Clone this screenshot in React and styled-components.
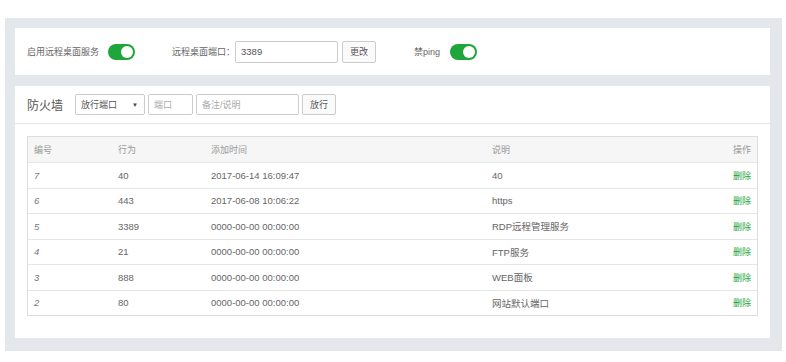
import styled, { createGlobalStyle } from "styled-components";

const GlobalStyle = createGlobalStyle`
  body {
    margin: 0;
    background: #fff;
    font-family: "Liberation Sans", "Noto Sans CJK SC", sans-serif;
    font-size: 9.5px;
    color: #666;
  }
`;

const Frame = styled.div`
  margin: 18px 4px 0 5px;
  padding: 10px 12px 13px 10px;
  background-color: #e4e7eb;
  display: flex;
  flex-direction: column;
  gap: 11px;
`;

const Panel = styled.div`
  background-color: #fff;
`;

const SettingBar = styled.div`
  height: 47px;
  display: flex;
  align-items: center;
  padding-left: 12px;
`;

const Label = styled.span`
  color: #666;
  font-size: 9px;
  margin-right: ${(p) => p.$gap || 0}px;
`;

const Toggle = styled.div`
  width: 27px;
  height: 16px;
  border-radius: 8px;
  background-color: #20a53a;
  position: relative;
  margin-right: ${(p) => p.$gap || 0}px;

  &::after {
    content: "";
    position: absolute;
    right: 2px;
    top: 2px;
    width: 12px;
    height: 12px;
    border-radius: 50%;
    background-color: #fff;
  }
`;

const TextInput = styled.div`
  width: ${(p) => p.$w}px;
  height: ${(p) => p.$h || 21}px;
  box-sizing: border-box;
  border: 1px solid #ccc;
  border-radius: 2px;
  padding-left: 5px;
  display: flex;
  align-items: center;
  font-size: ${(p) => (p.$placeholder ? 9 : 9.5)}px;
  color: ${(p) => (p.$placeholder ? "#aaa" : "#555")};
  background: #fff;
  margin-right: ${(p) => p.$gap || 0}px;
`;

const Button = styled.div`
  width: 34px;
  height: ${(p) => p.$h || 21}px;
  box-sizing: border-box;
  border: 1px solid #ccc;
  border-radius: 2px;
  background: #fafafa;
  display: flex;
  align-items: center;
  justify-content: center;
  font-size: 9px;
  color: #555;
  margin-right: ${(p) => p.$gap || 0}px;
`;

const SelectBox = styled(TextInput)`
  justify-content: space-between;
  padding-right: 6px;
  font-size: 9px;
  color: #555;

  &::after {
    content: "▼";
    font-size: 6px;
    color: #444;
  }
`;

const FirewallHead = styled.div`
  height: 37px;
  border-bottom: 1px solid #e6e6e6;
  display: flex;
  align-items: center;
  gap: 3px;
  padding-left: 12px;
`;

const Title = styled.span`
  font-size: 12px;
  color: #555;
  margin-right: 9px;
`;

const TableWrap = styled.div`
  padding: 12px 12px 22px 12px;
`;

const Table = styled.div`
  border: 1px solid #ddd;
`;

const Row = styled.div`
  display: grid;
  grid-template-columns: 84px 93px 281px 1fr auto;
  align-items: center;
  box-sizing: border-box;
  height: ${(p) => (p.$head ? 25 : 25.5)}px;
  padding: 0 6px;
  background-color: ${(p) => (p.$head ? "#f6f6f6" : "#fff")};
  color: ${(p) => (p.$head ? "#999" : "#666")};
  border-top: ${(p) => (p.$first ? "none" : "1px solid #e6e6e6")};
`;

const Cjk = styled.span`
  font-size: 9px;
`;

const Id = styled.span`
  font-style: italic;
  color: #777;
`;

const DelLink = styled.span`
  font-size: 9px;
  color: #20a53a;
`;

const rows = [
  { id: 7, port: "40", time: "2017-06-14 16:09:47", note: "40" },
  { id: 6, port: "443", time: "2017-06-08 10:06:22", note: "https" },
  { id: 5, port: "3389", time: "0000-00-00 00:00:00", note: "RDP远程管理服务" },
  { id: 4, port: "21", time: "0000-00-00 00:00:00", note: "FTP服务" },
  { id: 3, port: "888", time: "0000-00-00 00:00:00", note: "WEB面板" },
  { id: 2, port: "80", time: "0000-00-00 00:00:00", note: "网站默认端口" },
];

const App = () => {
  return (
    <>
      <GlobalStyle />
      <Frame>
        <Panel>
          <SettingBar>
            <Label $gap={9}>启用远程桌面服务</Label>
            <Toggle $gap={37} />
            <Label $gap={0}>远程桌面端口：</Label>
            <TextInput $w={103} $h={22} $gap={4}>3389</TextInput>
            <Button $h={22} $gap={38}>更改</Button>
            <Label $gap={10}>禁ping</Label>
            <Toggle />
          </SettingBar>
        </Panel>
        <Panel>
          <FirewallHead>
            <Title>防火墙</Title>
            <SelectBox $w={70}>放行端口</SelectBox>
            <TextInput $w={45} $placeholder>端口</TextInput>
            <TextInput $w={103} $placeholder>备注/说明</TextInput>
            <Button>放行</Button>
          </FirewallHead>
          <TableWrap>
            <Table>
              <Row $head $first>
                <Cjk>编号</Cjk>
                <Cjk>行为</Cjk>
                <Cjk>添加时间</Cjk>
                <Cjk>说明</Cjk>
                <Cjk>操作</Cjk>
              </Row>
              {rows.map((r) => (
                <Row key={r.id}>
                  <Id>{r.id}</Id>
                  <span>{r.port}</span>
                  <span>{r.time}</span>
                  <span>{r.note}</span>
                  <DelLink>删除</DelLink>
                </Row>
              ))}
            </Table>
          </TableWrap>
        </Panel>
      </Frame>
    </>
  );
};

export default App;
